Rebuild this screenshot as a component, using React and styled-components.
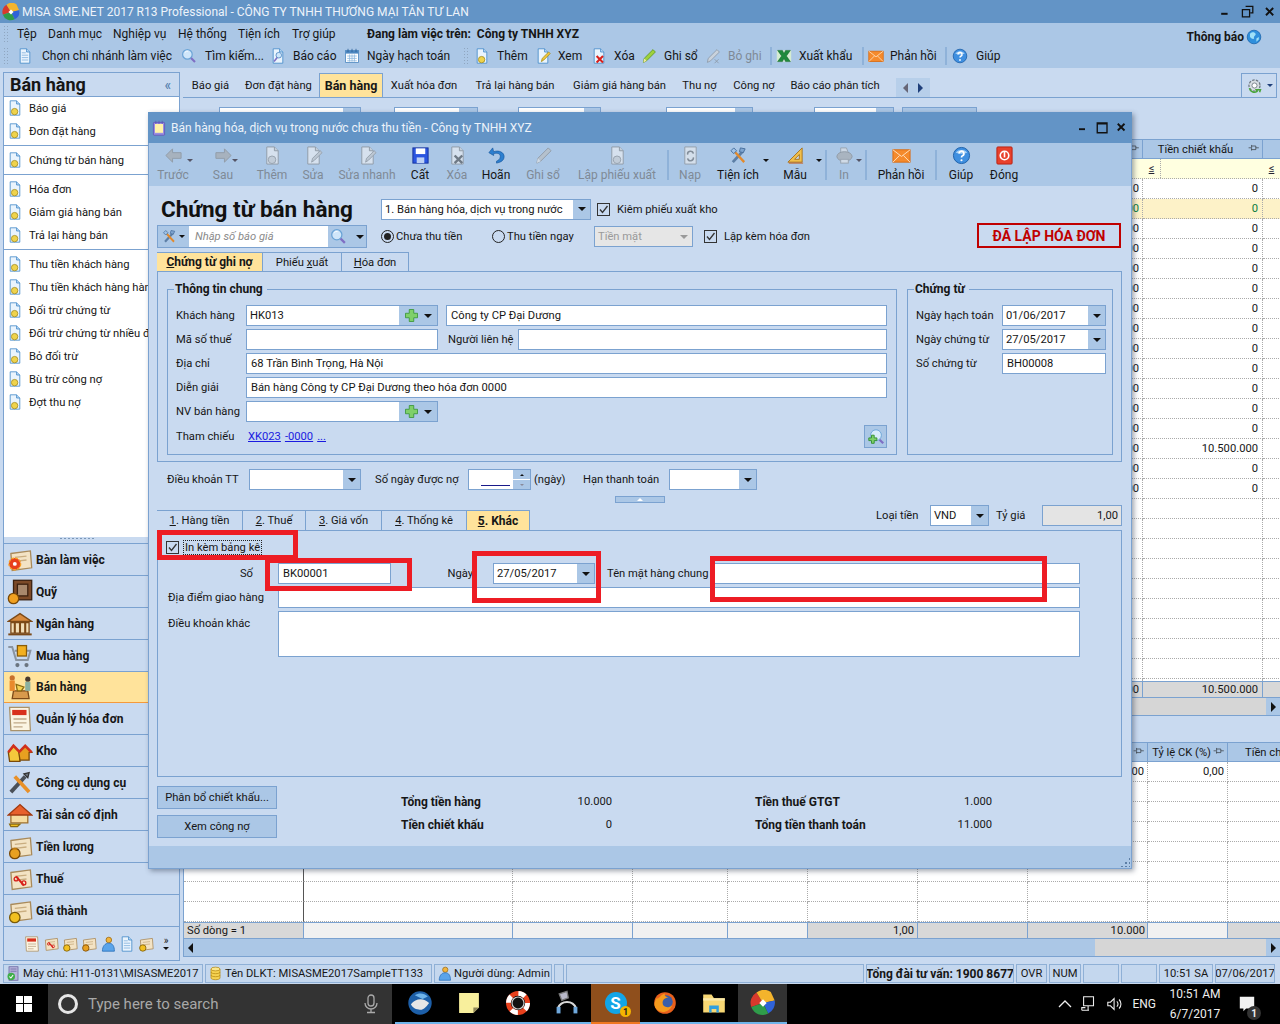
import React from 'react';
import styled, { createGlobalStyle } from 'styled-components';

const C = { title: '#6394c6', bar: '#abc7e6', body: '#c9daf0', line: '#7ba2d0', yellow: '#ffe39b', text: '#161616' };

const GlobalStyle = createGlobalStyle`
  html, body { margin: 0; padding: 0; background: ${C.body}; }
  body { font-family: Roboto, "Liberation Sans", Arial, sans-serif; font-size: 11.2px; color: ${C.text}; }
  * { box-sizing: border-box; }
  b { font-size: 12px; }
`;

const Svg = styled.svg`
  flex: none;
  display: block;
  ${p => p.$off && 'filter: grayscale(1) opacity(.6);'}
`;

const page = <path d="M4 1h8l4 4v14H4z" fill="#eaf4fd" stroke="#3f88c8" />;
const fold = <path d="M12 1v4h4" fill="#b9d8f2" stroke="#3f88c8" />;
const lines = <path d="M6 6h5M6 9h8M6 12h8M6 15h8" stroke="#7fb0dc" fill="none" />;
const scroll = <><path d="M3 5l15-2 1 13-15 2z" fill="#f3e3c4" stroke="#a98a5a" /><path d="M6 8l9-1M6 11l9-1" stroke="#c9ad80" /></>;
const bag = <><circle cx="6" cy="15" r="4" fill="#e8a020" stroke="#7a4a08" /><path d="M4 10.5h4l-1 1.5H5z" fill="#c07a10" /></>;

const shapes = {
  docAdd: <>{page}{fold}<circle cx="9.5" cy="14.5" r="4" fill="#efd34c" stroke="#a38c1d" /></>,
  docEdit: <>{page}{fold}<path d="M8 17l1-4 8-8 2 2-8 8z" fill="#f2c83a" stroke="#a38c1d" /></>,
  docDel: <>{page}{fold}<path d="M7 10l8 8M15 10l-8 8" stroke="#d8201c" strokeWidth="2.6" /></>,
  docList: <>{page}{fold}{lines}</>,
  search: <><circle cx="8" cy="8" r="6" fill="#cfe6fa" stroke="#6aa3d6" strokeWidth="1.5" /><path d="M5 5.5a4 4 0 0 1 4-1.5" stroke="#fff" fill="none" /><path d="M12.5 12.5l5 5" stroke="#7f6fc4" strokeWidth="2.6" /></>,
  report: <>{page}{fold}<circle cx="11" cy="9" r="3.5" fill="#cfe6fa" stroke="#4c87c0" /><path d="M9 12l-4 5" stroke="#7f6fc4" strokeWidth="2" /></>,
  calendar: <><rect x="2" y="3" width="16" height="15" fill="#fff" stroke="#4c87c0" /><rect x="2" y="3" width="16" height="4" fill="#4c87c0" /><path d="M5 1v4M10 1v4M15 1v4" stroke="#2a5d94" /><path d="M4 10h12M4 13h12M4 16h12M7 8v9M10 8v9M13 8v9" stroke="#8bb7de" /></>,
  pen: <><path d="M3 18l1-5L15 2l3 3L7 16z" fill="#9fd23c" stroke="#5c9420" /><path d="M3 18l1-5 3 3z" fill="#f5e9a0" /></>,
  penOff: <><path d="M3 18l1-5L15 2l3 3L7 16z" fill="#c9d2dc" stroke="#8b97a5" /><path d="M12 14l5 5M17 14l-5 5" stroke="#8b97a5" /></>,
  excel: <><path d="M1 3h18v14H1z" fill="#d5ecd2" /><path d="M2 3h6l2 4 2-4h6l-5 7 5 7h-6l-2-4-2 4H2l5-7z" fill="#1f8a3c" stroke="#0f5f26" strokeWidth=".6" /></>,
  mail: <><rect x="1" y="4" width="18" height="13" fill="#f58a2c" stroke="#d96a10" /><path d="M1 4l9 7 9-7M1 17l7-7M19 17l-7-7" stroke="#ffe3c2" fill="none" /></>,
  help: <><circle cx="10" cy="10" r="8.5" fill="#3f8fe0" stroke="#1c5fa8" /><path d="M4 7a7 6 0 0 1 12 0 9 4 0 0 1-12 0" fill="#a9d2f6" /><path d="M7.5 8a2.5 2.5 0 1 1 3.5 2.3c-.8.4-1 .9-1 1.7" stroke="#fff" strokeWidth="1.8" fill="none" /><circle cx="10" cy="15" r="1.1" fill="#fff" /></>,
  globe: <><circle cx="10" cy="10" r="8.5" fill="#2f8fdc" stroke="#1a66ad" /><path d="M5 6c3-3 6-2 7 0s-3 3-2 5-3 2-5-1z" fill="#9ee0f8" /><path d="M13 12l3-2v3l-3 3z" fill="#9ee0f8" /></>,
  gear: <><circle cx="10" cy="10" r="6.5" fill="#d8dde2" stroke="#6d7680" strokeWidth="1.5" strokeDasharray="3 1.5" /><circle cx="10" cy="10" r="3" fill="#fff" stroke="#6d7680" /><path d="M4 13a6 6 0 0 0 9 4l-1-2 5 0-1 3" stroke="#4aa63a" strokeWidth="1.8" fill="none" /></>,
  back: <path d="M9 3L2 10l7 7v-4h9V7H9z" fill="#98a6b5" stroke="#74818f" />,
  forward: <path d="M11 3l7 7-7 7v-4H2V7h9z" fill="#98a6b5" stroke="#74818f" />,
  save: <><rect x="2" y="2" width="16" height="16" fill="#2a55e0" stroke="#13309c" /><rect x="5" y="2.5" width="10" height="6" fill="#fff" /><rect x="6" y="12" width="8" height="6" fill="#bcd0f5" /></>,
  undo: <path d="M6 2L2 7l5 3V8c4-1 7 0 7 3s-2 4-4 5v2c5-1 8-3 8-7s-5-7-11-5z" fill="#2c7fd0" stroke="#16569c" strokeWidth=".7" />,
  reload: <><path d="M4 1h12v18H4z" fill="#eceff2" stroke="#7a858f" /><path d="M7 9a3 3 0 0 1 6-1M13 12a3 3 0 0 1-6 1" stroke="#5d6974" strokeWidth="1.6" fill="none" /></>,
  tools: <><path d="M4 17L15 5" stroke="#5d7fa6" strokeWidth="3" /><path d="M16 17L6 6" stroke="#e28a2c" strokeWidth="2.5" /><path d="M12 2l5 1-2 4-4-1z" fill="#7fa5d0" stroke="#486f9c" /><path d="M2 5l3-3 3 3-3 3z" fill="#9fc3e8" stroke="#486f9c" /></>,
  ruler: <><path d="M17 2v15H2z" fill="#f1c04c" stroke="#a8741c" /><path d="M14 9v5H9z" fill="#c9daf0" stroke="#a8741c" /><path d="M3 18h15" stroke="#c65c1c" /></>,
  printer: <><path d="M6 2h6l2 5H6z" fill="#e2e2e2" stroke="#8c8c8c" /><ellipse cx="10" cy="11" rx="8" ry="5" fill="#a7a7a7" stroke="#7d7d7d" /><rect x="6" y="14" width="8" height="4" fill="#e8e8e8" stroke="#8c8c8c" /></>,
  close: <><rect x="2" y="1" width="16" height="18" rx="1" fill="#e8402c" stroke="#b92010" /><circle cx="10" cy="10" r="4.5" fill="none" stroke="#fff" strokeWidth="1.7" /><path d="M10 6v6" stroke="#fff" strokeWidth="1.7" /></>,
  plus: <path d="M7 2h6v5h5v6h-5v5H7v-5H2V7h5z" fill="#7fd06a" stroke="#2f8f2c" />,
  lensPlus: <><circle cx="10" cy="8" r="6" fill="#d8ecfb" stroke="#6aa3d6" /><path d="M14 13l4 4" stroke="#7f6fc4" strokeWidth="2.5" /><path d="M5 8h3v3h3v3H8v3H5v-3H2v-3h3z" fill="#7fd06a" stroke="#2f8f2c" /></>,
  pin: <path d="M1 8h4M5 4h1v8H5M6 5h7v6H6M13 8h5" fill="none" stroke="#222" />,
  note: <><rect x="3" y="3" width="14" height="16" rx="1" fill="#9a8fe0" stroke="#5f50b8" /><rect x="5" y="5" width="10" height="11" fill="#fff3a8" /><path d="M6 1v4M10 1v4M14 1v4" stroke="#5f50b8" /></>,
  server: <><rect x="4" y="1" width="12" height="18" fill="#b7b4dc" stroke="#66639c" /><path d="M6 4h8M6 7h8" stroke="#66639c" /><circle cx="7" cy="14" r="5" fill="#3fae4a" /><path d="M4.5 14l2 2 3-4" stroke="#fff" strokeWidth="1.4" fill="none" /></>,
  db: <><path d="M4 4v12c0 3 12 3 12 0V4z" fill="#f5d252" stroke="#b58a12" /><ellipse cx="10" cy="4" rx="6" ry="2.5" fill="#fbe68c" stroke="#b58a12" /><path d="M4 8c0 3 12 3 12 0M4 12c0 3 12 3 12 0" fill="none" stroke="#b58a12" /></>,
  user: <><circle cx="11" cy="5" r="3.5" fill="#f2b43c" stroke="#9c6a10" /><path d="M3 19c0-6 3-10 8-10s7 4 7 10z" fill="#5aa4ea" stroke="#2a6fb8" /></>,
  flower: <>{scroll}<circle cx="6" cy="13" r="4.5" fill="#e8401c" stroke="#f8a020" strokeDasharray="2 1" /><circle cx="6" cy="13" r="1.5" fill="#fff" /></>,
  safe: <><rect x="5" y="1" width="14" height="15" fill="#7c4a28" stroke="#3c2210" /><rect x="8" y="4" width="8" height="9" fill="#a8886c" stroke="#3c2210" /><circle cx="5" cy="15" r="4" fill="#f0a020" stroke="#7a4a08" /></>,
  bank: <><path d="M1 8l9-6 9 6z" fill="#d88a3c" stroke="#7c4a18" /><path d="M3 9h14v8H3z" fill="#f3dfb8" stroke="#7c4a18" /><path d="M6 9v8M10 9v8M14 9v8" stroke="#7c4a18" strokeWidth="1.6" /><path d="M1 18h18" stroke="#7c4a18" strokeWidth="1.5" /></>,
  cart: <><path d="M1 3h3l3 10h9l2-7H6" fill="none" stroke="#8a94a0" strokeWidth="1.5" /><rect x="8" y="2" width="7" height="8" fill="#f2b020" stroke="#8a5c08" /><circle cx="8" cy="17" r="1.6" fill="#6b7580" /><circle cx="15" cy="17" r="1.6" fill="#6b7580" /></>,
  sell: <><path d="M5 13h11l1 6H4z" fill="#d89a4c" stroke="#7c4a18" /><circle cx="4" cy="3" r="2" fill="#c8702c" /><path d="M2 5h4v8H2z" fill="#e88a2c" /><circle cx="16" cy="4" r="2" fill="#4a3a2c" /><path d="M14 6h4v7h-4z" fill="#8ab0a0" /><path d="M7 8l6 2-2 3H8z" fill="#f5d252" stroke="#8a6a10" /></>,
  invoice: <><path d="M2 1h15l1 18H3z" fill="#fbf4e2" stroke="#a9926a" /><rect x="4" y="3" width="11" height="4" fill="#d8301c" /><path d="M5 10h10M5 13h10M5 16h7" stroke="#c0a888" /></>,
  store: <><path d="M1 11l4-5 5 5v7H2z" fill="#f5c83c" stroke="#7a4a08" /><path d="M9 11l5-5 5 5h-2v6H10z" fill="#e8a020" stroke="#7a4a08" /><path d="M1 11l4-5 5 5M9 11l5-5 5 5" fill="none" stroke="#d0301c" strokeWidth="2" /></>,
  wrench: <><path d="M3 17L14 5" stroke="#4a5058" strokeWidth="3" /><path d="M17 17L6 5" stroke="#e89028" strokeWidth="2.8" /><path d="M13 3l4-1-1 4z" fill="#6d7680" stroke="#333" /></>,
  house: <><path d="M3 9h13v7H3z" fill="#f6dca0" stroke="#a0702c" /><path d="M1 10l9-8 9 8z" fill="#e8602c" stroke="#a03a10" /><path d="M2 17h8l-2 2H3z" fill="#f0c020" stroke="#8a6a10" /></>,
  pay: <>{scroll}{bag}</>,
  tax: <>{scroll}<path d="M7 8l6 7" stroke="#d8201c" strokeWidth="1.5" /><circle cx="7" cy="10" r="1.5" fill="none" stroke="#d8201c" /><circle cx="13" cy="13" r="1.5" fill="none" stroke="#d8201c" /></>,
  cost: <>{scroll}<circle cx="6" cy="15" r="4" fill="#f2c020" stroke="#7a5a08" /></>,
  misa: <><path d="M10 10L5 2a9 9 0 0 0-4 11z" fill="#d8392c" /><path d="M10 10L5 2a9 9 0 0 1 11-.5L19 8z" fill="#f4b42c" /><path d="M10 10l9-2a9 9 0 0 1-5 10z" fill="#2f62d8" /><path d="M10 10l4 8a9 9 0 0 1-13-5z" fill="#2f9c4a" /><rect x="8" y="8" width="4" height="4" transform="rotate(45 10 10)" fill="#fff" /></>,
  thunder: <><circle cx="10" cy="10" r="9" fill="#1d5fa8" /><path d="M3 11c4-5 10-5 14-1-3 4-5 6-8 5-3 0-5-2-6-4z" fill="#e6e6e6" /><path d="M6 4c3-2 7-2 10 1l-4 2z" fill="#6fb4ea" /></>,
  sticky: <><path d="M1 1h18v13l-5 5H1z" fill="#f8ef9c" /><path d="M19 14l-5 5v-5z" fill="#8c8458" /></>,
  lifesaver: <><circle cx="10" cy="10" r="8" fill="none" stroke="#e8401c" strokeWidth="4" /><circle cx="10" cy="10" r="8" fill="none" stroke="#fff" strokeWidth="4" strokeDasharray="6 6.6" /><circle cx="10" cy="10" r="5" fill="#111" stroke="#ccc" /></>,
  headset: <><path d="M3 14a7.5 7.5 0 0 1 14 0" fill="none" stroke="#d8d8d8" strokeWidth="1.6" /><rect x="2" y="13" width="3" height="5" fill="#6fa8dc" /><rect x="15" y="13" width="3" height="5" fill="#6fa8dc" /><path d="M4 3l6-2 1 5-5 2z" fill="#b8b8c8" stroke="#777" /></>,
  firefox: <><circle cx="10" cy="10" r="9" fill="#e8601c" /><circle cx="11" cy="9" r="5.5" fill="#3a5ea8" /><path d="M3 6c2 1 3-3 7-4-1 2 1 3 3 3-3 1-5 2-5 5s4 5 8 2c-2 5-8 7-12 4S1 9 3 6z" fill="#f59a1c" /></>,
  folder: <><path d="M1 3h7l2 3h9v12H1z" fill="#f7d774" /><path d="M1 6h18v2H1z" fill="#fbe9a8" /><path d="M6 12h8v6h-2v-3H8v3H6z" fill="#2f9fe0" /></>,
  monitor: <path d="M4 2h11v10H4zM9 12v5M2 17h8M2 17v-3h4" fill="none" stroke="#eee" strokeWidth="1.2" />,
  volume: <path d="M2 8h3l4-4v12l-4-4H2zM12 7a4 4 0 0 1 0 6M14.5 5a7 7 0 0 1 0 10" fill="none" stroke="#eee" strokeWidth="1.2" />,
  mic: <><rect x="7" y="1" width="6" height="11" rx="3" fill="none" stroke="#aaa" strokeWidth="1.3" /><path d="M4 9a6 6 0 0 0 12 0M10 15v3M6 18.5h8" fill="none" stroke="#aaa" strokeWidth="1.3" /></>,
  bubble: <path d="M2 2h16v13H9l-3 3v-3H2z" fill="#f2f2f2" />,
  winmin: <path d="M4 11h8v2.5H4z" fill="#111" />,
  winrestore: <path d="M7 3h9v8h-3M3 7h9v9H3z" fill="none" stroke="#111" strokeWidth="1.6" />,
  winmax: <path d="M3 4h13v13H3zM3 5h13" fill="none" stroke="#111" strokeWidth="1.8" />,
  winclose: <path d="M5 5l9 9M14 5l-9 9" stroke="#111" strokeWidth="2.4" />,
};

const Icon = ({ name, size = 16, off }) => (
  <Svg width={size} height={size} viewBox="0 0 20 20" $off={off}>{shapes[name]}</Svg>
);

const Caret = styled.i`
  flex: none;
  width: 0;
  height: 0;
  border-left: ${p => p.$s || 4}px solid transparent;
  border-right: ${p => p.$s || 4}px solid transparent;
  border-${p => (p.$up ? 'bottom' : 'top')}: ${p => p.$s || 4}px solid ${p => p.$c || '#111'};
`;

const Root = styled.div`
  position: relative;
  width: 1280px;
  height: 1024px;
  overflow: hidden;
  display: flex;
  flex-direction: column;
  background: ${C.body};
`;

const TitleBar = styled.div`
  height: 23px;
  background: ${C.title};
  display: flex;
  align-items: center;
  padding: 0 2px 0 2px;
  color: #edf3fa;
`;
const TitleText = styled.span`
  margin-left: 2px;
  font-size: 12px;
  flex: 1;
`;
const WinButtons = styled.div`
  display: flex;
  gap: ${p => p.$gap || 6}px;
`;

const TopBars = styled.div`
  height: 45px;
  background: ${C.bar};
  font-size: 12px;
`;
const BarRow = styled.div`
  height: 22px;
  display: flex;
  align-items: center;
  padding-left: 3px;
`;
const Grip = styled.span`
  flex: none;
  width: 5px;
  height: 18px;
  margin-right: ${p => p.$mr || 0}px;
  background: radial-gradient(circle, #8fa6c0 1px, transparent 1px) 0 0 / 3px 3px;
`;
const MenuItem = styled.span`
  flex: none;
  width: ${p => p.$w}px;
`;
const Working = styled.b`
  flex: 1;
`;
const Notify = styled.b`
  display: flex;
  align-items: center;
  gap: 2px;
  margin-right: 18px;
  margin-top: 5px;
`;
const BarTool = styled.span`
  flex: none;
  width: ${p => p.$w}px;
  display: flex;
  align-items: center;
  gap: ${p => p.$gap || 7}px;
  color: ${p => (p.$off ? '#7f8a96' : C.text)};
`;
const BarSep = styled.span`
  flex: none;
  width: ${p => p.$w || 6}px;
  height: 18px;
  border-left: 2px solid #8fb2d9;
`;

const Main = styled.div`
  height: 894px;
  display: flex;
  padding-left: 3px;
  gap: 3px;
`;

const Sidebar = styled.aside`
  flex: none;
  width: 177px;
  height: 889px;
  margin-top: 4px;
  display: flex;
  flex-direction: column;
  border: 1px solid ${C.line};
`;
const SideHead = styled.div`
  height: 24px;
  display: flex;
  align-items: center;
  justify-content: space-between;
  padding: 0 8px 0 6px;
  font-size: 18px;
  font-weight: bold;
  border-bottom: 1px solid ${C.line};
`;
const Collapse = styled.span`
  font-size: 14px;
  font-weight: normal;
  color: #4c78a8;
`;
const SideList = styled.div`
  height: 440px;
  background: #fff;
`;
const SideItem = styled.div`
  height: 23px;
  display: flex;
  align-items: center;
  gap: 6px;
  padding: 0 0 1px 3px;
  white-space: nowrap;
  overflow: hidden;
`;
const SideSep = styled.div`
  height: 6px;
  padding-top: 2px;
  &::before {
    content: '';
    display: block;
    border-top: 1px solid ${C.line};
  }
`;
const Splitter = styled.div`
  height: 6px;
  display: flex;
  justify-content: center;
  padding-right: 30px;
  &::before {
    content: '';
    width: 36px;
    height: 3px;
    background: radial-gradient(circle, #7b97b8 1px, transparent 1px) 0 0 / 4px 3px;
  }
`;
const NavItem = styled.div`
  height: 32px;
  display: flex;
  align-items: center;
  gap: 3px;
  padding-left: 3px;
  font-size: 12px;
  font-weight: bold;
  border-top: 1px solid ${C.line};
  background: ${p => (p.$active ? C.yellow : 'transparent')};
  ${p => p.$active && 'border-bottom: 1px solid #f59a3c; margin-bottom: -1px; position: relative;'}
`;
const NavStrip = styled.div`
  flex: 1;
  display: flex;
  align-items: center;
  gap: 3px;
  padding-left: 20px;
  border-top: 1px solid ${C.line};
`;
const More = styled.div`
  display: flex;
  flex-direction: column;
  align-items: center;
  margin-left: 6px;
  font-size: 10px;
  line-height: 8px;
  gap: 2px;
`;

const Pane = styled.section`
  flex: 1;
  padding-top: 5px;
  display: flex;
  flex-direction: column;
`;
const PaneTabs = styled.nav`
  height: 25px;
  margin-right: 4px;
  display: flex;
  align-items: stretch;
  border-bottom: 1px solid ${C.line};
`;
const PaneTab = styled.span`
  flex: none;
  width: ${p => p.$w}px;
  display: flex;
  align-items: center;
  justify-content: center;
  white-space: nowrap;
  ${p => p.$active && `
    font-size: 12.5px;
    font-weight: bold;
    background: ${C.yellow};
    border: 1px solid ${C.line};
    border-bottom: 0;
  `}
`;
const TabScroll = styled.span`
  width: 34px;
  margin: 5px 0 0 9px;
  background: #b7cfea;
  display: flex;
  align-items: center;
  justify-content: center;
  gap: 10px;
`;
const Tri = styled.i`
  width: 0;
  height: 0;
  border-top: 5px solid transparent;
  border-bottom: 5px solid transparent;
  border-${p => (p.$dir === 'left' ? 'right' : 'left')}: 5px solid ${p => p.$c};
`;
const GearBox = styled.span`
  margin-left: auto;
  width: 36px;
  display: flex;
  align-items: center;
  justify-content: center;
  gap: 4px;
  border: 1px solid ${C.line};
  border-bottom: 0;
`;
const StubRow = styled.div`
  height: 41px;
  padding: 9px 0 0 36px;
  display: flex;
  align-items: flex-start;
`;
const StubField = styled.span`
  flex: none;
  height: 20px;
  width: ${p => p.$w}px;
  margin-right: ${p => p.$mr || 0}px;
  border: 1px solid ${C.line};
  background: linear-gradient(90deg, #fff ${p => p.$white}%, ${C.bar} ${p => p.$white}%);
`;

const GridHead = styled.div`
  display: grid;
  grid-template-columns: ${p => p.$cols};
  height: 20px;
  background: ${C.bar};
  border-top: 1px solid ${C.line};
  border-bottom: 1px solid ${C.line};
`;
const HeadCell = styled.span`
  display: flex;
  align-items: center;
  justify-content: ${p => p.$align || 'flex-end'};
  padding: 0 ${p => (p.$align ? 0 : 2)}px 0 ${p => p.$pl || 2}px;
  border-right: 1px solid ${C.line};
  white-space: nowrap;
  overflow: hidden;
  gap: 2px;
`;
const HeadTitle = styled.span`
  flex: 1;
  text-align: center;
`;
const FilterRow = styled.div`
  display: grid;
  grid-template-columns: ${p => p.$cols};
  height: 20px;
  background: #ffffe0;
  border-bottom: 1px dotted #aaa;
`;
const FilterOp = styled.span`
  display: flex;
  width: 18px;
  height: 100%;
  align-items: center;
  justify-content: center;
  border-right: 1px dotted #aaa;
  text-decoration: underline;
  color: #223;
`;
const RowsArea = styled.div`
  height: ${p => p.$h}px;
  overflow: hidden;
  background: #fff;
`;
const DataRow = styled.div`
  display: grid;
  grid-template-columns: ${p => p.$cols};
  height: 20px;
  background: ${p => (p.$hl ? '#fdf2c8' : 'transparent')};
  color: ${p => (p.$hl ? '#0a7a3c' : C.text)};
`;
const Cell = styled.span`
  display: flex;
  align-items: center;
  justify-content: flex-end;
  padding-right: ${p => p.$pr || 3}px;
  border-bottom: 1px dotted #aaa;
  border-right: ${p => (p.$solid ? '1px solid #555' : '1px dotted #aaa')};
  white-space: nowrap;
`;
const TotalRow = styled.div`
  display: grid;
  grid-template-columns: ${p => p.$cols};
  height: 17px;
  background: #d8d8d8;
  border-top: 1px solid ${C.line};
  border-bottom: 1px solid ${C.line};
`;
const TotalCell = styled.span`
  display: flex;
  align-items: center;
  justify-content: ${p => (p.$left ? 'flex-start' : 'flex-end')};
  padding: 0 ${p => (p.$pr ? p.$pr : 3)}px 0 3px;
  border-right: 1px solid ${C.line};
  background: ${p => (p.$light ? '#f1f1f1' : 'transparent')};
  white-space: nowrap;
`;
const HScroll = styled.div`
  height: ${p => p.$h}px;
  display: flex;
  align-items: center;
  background: ${p => p.$bg || '#d6d6d6'};
  border-bottom: 1px solid ${C.line};
`;
const ScrollTrack = styled.span`
  flex: 1;
  height: 100%;
  display: flex;
  align-items: center;
  padding-left: 4px;
  background: linear-gradient(90deg, ${C.bar} ${p => p.$fill || 0}%, #d6d6d6 ${p => p.$fill || 0}%);
`;
const ScrollBtn = styled.span`
  flex: none;
  width: 15px;
  height: 100%;
  display: flex;
  align-items: center;
  justify-content: center;
  background: ${C.bar};
`;
const Band = styled.div`
  height: 26px;
`;
const GridWrap = styled.div`
  border-left: 1px solid ${C.line};
`;

// the dialog sits on top of the main window
const Dialog = styled.div`
  position: absolute;
  left: 148px;
  top: 112px;
  width: 984px;
  height: 757px;
  display: flex;
  flex-direction: column;
  background: ${C.body};
  border: 1px solid ${C.line};
  border-top: 0;
  box-shadow: 2px 2px 5px rgba(40, 50, 70, .45);
`;
const DialogTitle = styled.div`
  flex: none;
  height: 31px;
  background: ${C.title};
  display: flex;
  align-items: center;
  padding: 0 3px 0 3px;
  color: #edf3fa;
  margin: 0 -1px;
  font-size: 12px;
`;
const DialogName = styled.span`
  flex: 1;
  margin-left: 4px;
`;
const DlgBar = styled.div`
  flex: none;
  height: 43px;
  background: ${C.bar};
  display: flex;
  padding-left: 4px;
  font-size: 12px;
`;
const Tool = styled.div`
  position: relative;
  flex: none;
  width: ${p => p.$w}px;
  display: flex;
  flex-direction: column;
  align-items: center;
  padding-top: 3px;
  color: ${p => (p.$off ? '#7f8a96' : C.text)};
  white-space: nowrap;
`;
const ToolText = styled.span`
  margin-top: 3px;
`;
const ToolDrop = styled.span`
  position: absolute;
  right: ${p => p.$r}px;
  top: 19px;
`;
const ToolSep = styled.span`
  flex: none;
  width: 2px;
  height: 30px;
  margin: 7px 0 0 ${p => p.$ml || 0}px;
  background: #8fb2d9;
`;

const DlgBody = styled.div`
  flex: 1;
  padding: 0 9px 0 8px;
  display: flex;
  flex-direction: column;
`;
const HeadRow = styled.div`
  flex: none;
  height: ${p => p.$h}px;
  margin-top: ${p => p.$mt}px;
  display: flex;
  align-items: center;
`;
const BigTitle = styled.h1`
  flex: none;
  width: 224px;
  margin: 0;
  padding-left: 4px;
  font-size: 22.5px;
  font-weight: bold;
  color: #111;
  white-space: nowrap;
`;
const Combo = styled.span`
  flex: none;
  display: flex;
  height: ${p => p.$h || 21}px;
  width: ${p => (p.$w ? `${p.$w}px` : 'auto')};
  margin-left: ${p => p.$ml || 0}px;
  border: 1px solid ${C.line};
  background: ${p => (p.$off ? '#e6e6e6' : '#fff')};
  color: ${p => (p.$off ? '#9a9a9a' : C.text)};
`;
const ComboText = styled.span`
  flex: 1;
  padding-left: 3px;
  display: flex;
  align-items: center;
  white-space: nowrap;
  overflow: hidden;
`;
const ComboBtn = styled.span`
  flex: none;
  width: ${p => p.$w || 17}px;
  display: flex;
  align-items: center;
  justify-content: center;
  gap: 5px;
  background: ${p => (p.$off ? 'transparent' : C.bar)};
`;
const Check = styled.span`
  flex: none;
  width: 13px;
  height: 13px;
  display: flex;
  background: ${C.body};
  border: 1px solid #333;
`;
const CheckLabel = styled.label`
  display: flex;
  align-items: center;
  gap: ${p => p.$gap || 7}px;
  margin-left: ${p => p.$ml || 0}px;
  white-space: nowrap;
`;
const Radio = styled.span`
  flex: none;
  width: 13px;
  height: 13px;
  border-radius: 50%;
  border: 1px solid #222;
  background: ${C.body};
  display: flex;
  align-items: center;
  justify-content: center;
  &::after {
    content: '';
    width: 7px;
    height: 7px;
    border-radius: 50%;
    background: ${p => (p.$on ? '#222' : 'transparent')};
  }
`;
const RadioLabel = styled.label`
  flex: none;
  width: ${p => p.$w}px;
  margin-left: ${p => p.$ml || 0}px;
  display: flex;
  align-items: center;
  gap: 2px;
  white-space: nowrap;
`;
const SearchBox = styled.span`
  flex: none;
  width: 210px;
  height: 23px;
  display: flex;
  align-items: center;
  background: ${C.bar};
  border: 1px solid ${C.line};
`;
const SearchTools = styled.span`
  flex: none;
  width: 31px;
  display: flex;
  align-items: center;
  justify-content: center;
  gap: 2px;
`;
const SearchInput = styled.span`
  flex: none;
  width: 139px;
  height: 100%;
  background: #fff;
  padding-left: 6px;
  display: flex;
  align-items: center;
  font-style: italic;
  color: #8a8a8a;
`;
const SearchBtn = styled.span`
  flex: 1;
  display: flex;
  align-items: center;
  justify-content: center;
  gap: 9px;
`;
const Stamp = styled.div`
  flex: none;
  width: 144px;
  height: 25px;
  margin: -2px 1px 0 auto;
  display: flex;
  align-items: center;
  justify-content: center;
  border: 2px solid #c00000;
  font-size: 14px;
  font-weight: bold;
  color: #c00000;
`;
const TabRow = styled.div`
  flex: none;
  display: flex;
  height: ${p => p.$h || 19}px;
  margin-top: ${p => p.$mt || 0}px;
  align-items: flex-end;
`;
const FormTab = styled.span`
  flex: none;
  height: ${p => p.$h || 19}px;
  width: ${p => p.$w}px;
  display: flex;
  align-items: center;
  justify-content: center;
  border: 1px solid ${C.line};
  border-left: 0;
  border-bottom: 0;
  white-space: pre;
  ${p => p.$active && `background: ${C.yellow}; font-weight: bold; font-size: 12px;`}
`;
const Panel = styled.div`
  flex: none;
  height: ${p => p.$h}px;
  border: 1px solid ${C.line};
  padding: ${p => p.$pad};
  display: flex;
  ${p => p.$col && 'flex-direction: column;'}
  gap: ${p => p.$gap || 0}px;
`;
const Group = styled.div`
  position: relative;
  flex: ${p => (p.$w ? 'none' : 1)};
  width: ${p => (p.$w ? `${p.$w}px` : 'auto')};
  height: 166px;
  border: 1px solid ${C.line};
  padding: 15px ${p => p.$pr}px 0 8px;
  display: flex;
  flex-direction: column;
  gap: 3px;
`;
const Legend = styled.b`
  position: absolute;
  left: 6px;
  top: -8px;
  padding: 0 4px 0 1px;
  background: ${C.body};
  line-height: 14px;
`;
const FieldRow = styled.div`
  flex: none;
  display: flex;
  align-items: center;
  height: ${p => p.$h || 21}px;
  margin-top: ${p => p.$mt || 0}px;
  padding-left: ${p => p.$pl || 0}px;
`;
const Label = styled.span`
  flex: none;
  width: ${p => p.$w}px;
  padding-left: ${p => p.$pl || 0}px;
  padding-right: ${p => p.$pr || 0}px;
  text-align: ${p => p.$align || 'left'};
  white-space: nowrap;
  ${p => p.$top && 'align-self: flex-start; padding-top: 6px;'}
`;
const Field = styled.span`
  flex: ${p => (p.$w ? 'none' : 1)};
  width: ${p => (p.$w ? `${p.$w}px` : 'auto')};
  height: ${p => p.$h || 21}px;
  margin-left: ${p => p.$ml || 0}px;
  padding: 0 3px 0 4px;
  display: flex;
  align-items: center;
  justify-content: ${p => (p.$right ? 'flex-end' : 'flex-start')};
  border: 1px solid ${C.line};
  background: ${p => (p.$grey ? '#e4e4e4' : '#fff')};
  white-space: nowrap;
`;
const Links = styled.span`
  display: flex;
  gap: 4px;
  color: #1a1ae0;
  text-decoration: underline;
`;
const LensBtn = styled.span`
  flex: none;
  width: 23px;
  height: 23px;
  margin-left: auto;
  display: flex;
  align-items: center;
  justify-content: center;
  background: ${C.bar};
  border: 1px solid ${C.line};
`;
const Spinner = styled.span`
  flex: none;
  width: 63px;
  height: 21px;
  display: flex;
  background: #fff;
  border: 1px solid ${C.line};
`;
const SpinBlank = styled.span`
  flex: 1;
  margin: 0 3px 3px 12px;
  border-bottom: 1px solid #1a1a8a;
`;
const SpinBtns = styled.span`
  flex: none;
  width: 17px;
  display: flex;
  flex-direction: column;
`;
const SpinBtn = styled.span`
  flex: 1;
  display: flex;
  align-items: center;
  justify-content: center;
  background: ${C.bar};
  &:last-child { margin-top: 1px; }
`;
const CollapseBtn = styled.span`
  flex: none;
  width: 50px;
  height: 7px;
  margin: 6px 0 0 458px;
  display: flex;
  justify-content: center;
  align-items: center;
  background: ${C.bar};
  border: 1px solid ${C.line};
`;
const TabsLine = styled.div`
  flex: none;
  display: flex;
  height: 25px;
  margin-top: 2px;
  justify-content: space-between;
`;
const TabsLeft = styled.div`
  display: flex;
  align-items: flex-end;
`;
const RateBox = styled.div`
  display: flex;
  align-items: center;
  height: 21px;
`;
const PrintCheck = styled.div`
  flex: none;
  height: 18px;
  margin: 7px 0 0 8px;
  display: flex;
  align-items: center;
  gap: 4px;
`;
const DottedLabel = styled.span`
  padding: 0 1px;
  border: 1px dotted #222;
  line-height: 13px;
`;
const Footer = styled.div`
  flex: 1;
  display: flex;
  padding-top: 9px;
`;
const FootBtns = styled.div`
  flex: none;
  width: 120px;
  display: flex;
  flex-direction: column;
  gap: 6px;
`;
const FootBtn = styled.span`
  height: 23px;
  display: flex;
  align-items: center;
  justify-content: center;
  background: ${C.bar};
  border: 1px solid ${C.line};
`;
const Totals = styled.div`
  margin-left: 124px;
  padding-top: 4px;
  display: grid;
  grid-template-columns: 140px 71px 143px 150px 87px;
  grid-auto-rows: 23px;
  align-items: center;
`;
const TotalLabel = styled.b`
  white-space: nowrap;
`;
const TotalValue = styled.span`
  text-align: right;
`;
const DlgFoot = styled.div`
  flex: none;
  height: 22px;
  background: ${C.bar};
  display: flex;
  justify-content: flex-end;
  align-items: flex-end;
  padding: 0 1px 1px 0;
`;
const ResizeGrip = styled.span`
  width: 10px;
  height: 10px;
  background: radial-gradient(circle, #5d7fa6 1px, transparent 1.2px) 0 0 / 4px 4px;
  clip-path: polygon(100% 0, 100% 100%, 0 100%);
`;
const Marker = styled.div`
  position: absolute;
  left: ${p => p.$x - 148}px;
  top: ${p => p.$y - 112}px;
  width: ${p => p.$w}px;
  height: ${p => p.$h}px;
  border: 5px solid #ed1c24;
  pointer-events: none;
`;

const Status = styled.footer`
  height: 22px;
  padding: 2px 2px 1px 3px;
  display: flex;
  gap: 2px;
`;
const StatusCell = styled.span`
  flex: none;
  width: ${p => p.$w}px;
  display: flex;
  align-items: center;
  justify-content: ${p => (p.$center ? 'center' : 'flex-start')};
  gap: 2px;
  padding-left: ${p => (p.$center ? 0 : 2)}px;
  background: #c4d7ee;
  border: 1px solid #8fb0d6;
  white-space: nowrap;
  overflow: hidden;
`;

const Taskbar = styled.div`
  height: 40px;
  background: #000;
  display: flex;
  color: #eee;
  font-size: 12px;
`;
const StartBtn = styled.span`
  flex: none;
  width: 48px;
  display: flex;
  align-items: center;
  justify-content: center;
`;
const WinLogo = styled.span`
  display: grid;
  grid-template-columns: 7px 8px;
  grid-template-rows: 7px 8px;
  gap: 1px;
  & i { background: #fff; }
`;
const TaskSearch = styled.span`
  flex: none;
  width: 344px;
  display: flex;
  align-items: center;
  padding: 0 11px 0 10px;
  background: #333;
  font-size: 15px;
  color: #a8a8a8;
`;
const Cortana = styled.span`
  flex: none;
  width: 20px;
  height: 20px;
  margin-right: 10px;
  border-radius: 50%;
  border: 3px solid #e6e6e6;
`;
const SearchHint = styled.span`
  flex: 1;
`;
const TaskApps = styled.div`
  flex: none;
  display: flex;
  padding-left: 3px;
`;
const TaskApp = styled.span`
  position: relative;
  flex: none;
  width: 49px;
  display: flex;
  align-items: center;
  justify-content: center;
  background: ${p => p.$bg || 'transparent'};
  border-bottom: 2px solid ${p => p.$accent || '#6fb4ea'};
`;
const SkypeMark = styled.span`
  width: 22px;
  height: 22px;
  border-radius: 50%;
  background: #12a5e6;
  color: #fff;
  font-weight: bold;
  font-size: 17px;
  display: flex;
  align-items: center;
  justify-content: center;
`;
const Badge = styled.span`
  position: absolute;
  right: ${p => p.$r}px;
  bottom: ${p => p.$b}px;
  width: ${p => p.$s}px;
  height: ${p => p.$s}px;
  border-radius: 50%;
  background: ${p => p.$bg};
  color: ${p => p.$c};
  font-size: ${p => p.$fs}px;
  font-weight: bold;
  display: flex;
  align-items: center;
  justify-content: center;
`;
const Tray = styled.div`
  flex: 1;
  display: flex;
  align-items: center;
  justify-content: flex-end;
  padding-right: 24px;
  gap: 8px;
`;
const Clock = styled.span`
  width: 62px;
  margin-right: 4px;
  text-align: center;
  line-height: 20px;
`;
const NotifyWrap = styled.span`
  position: relative;
`;

const dlgTools = [
  { w: 40, name: 'back', text: 'Trước', off: 1, drop: 0 },
  { w: 60, name: 'forward', text: 'Sau', off: 1, drop: 15 },
  { w: 38, name: 'docAdd', text: 'Thêm', off: 1 },
  { w: 44, name: 'docEdit', text: 'Sửa', off: 1 },
  { w: 64, name: 'docEdit', text: 'Sửa nhanh', off: 1 },
  { w: 42, name: 'save', text: 'Cất' },
  { w: 32, name: 'docDel', text: 'Xóa', off: 1 },
  { w: 46, name: 'undo', text: 'Hoãn' },
  { w: 48, name: 'pen', text: 'Ghi sổ', off: 1 },
  { w: 100, name: 'docAdd', text: 'Lập phiếu xuất', off: 1 },
  { sep: 1 },
  { w: 42, name: 'reload', text: 'Nạp', off: 1 },
  { w: 54, name: 'tools', text: 'Tiện ích', drop: -4 },
  { w: 60, name: 'ruler', text: 'Mẫu', drop: 3 },
  { sep: 1 },
  { w: 34, name: 'printer', text: 'In', off: 1, drop: -1 },
  { sep: 1, ml: 4 },
  { w: 68, name: 'mail', text: 'Phản hồi' },
  { sep: 1 },
  { w: 48, name: 'help', text: 'Giúp' },
  { w: 38, name: 'close', text: 'Đóng' },
];

const sideItems = [
  'Báo giá', 'Đơn đặt hàng', null, 'Chứng từ bán hàng', null, 'Hóa đơn', 'Giảm giá hàng bán', 'Trả lại hàng bán', null,
  'Thu tiền khách hàng', 'Thu tiền khách hàng hàng loạt', 'Đối trừ chứng từ', 'Đối trừ chứng từ nhiều đối tượng',
  'Bỏ đối trừ', 'Bù trừ công nợ', 'Đợt thu nợ',
];

const navItems = [
  ['flower', 'Bàn làm việc'], ['safe', 'Quỹ'], ['bank', 'Ngân hàng'], ['cart', 'Mua hàng'], ['sell', 'Bán hàng'],
  ['invoice', 'Quản lý hóa đơn'], ['store', 'Kho'], ['wrench', 'Công cụ dụng cụ'], ['house', 'Tài sản cố định'],
  ['pay', 'Tiền lương'], ['tax', 'Thuế'], ['cost', 'Giá thành'],
];

const topCols = '959px 120px 1fr';
const lowCols = '120px 209px 120px 95px 80px 110px 110px 120px 80px 1fr';
const topRows = Array.from({ length: 26 }, (_, i) => {
  if (i > 15) return ['', ''];
  return [i === 0 ? '0' : '00', i === 13 ? '10.500.000' : '0'];
});

const Tick = () => (
  <Svg width="11" height="11" viewBox="0 0 11 11"><path d="M2 5.5l2.5 3L9.5 2" fill="none" stroke="#333" strokeWidth="1.3" /></Svg>
);

export default function App() {
  return (
    <Root>
      <GlobalStyle />
      <TitleBar>
        <Icon name="misa" size={18} />
        <TitleText>MISA SME.NET 2017 R13 Professional - CÔNG TY TNHH THƯƠNG MẠI TÂN TƯ LAN</TitleText>
        <WinButtons>
          <Icon name="winmin" size={16} /><Icon name="winrestore" size={16} /><Icon name="winclose" size={16} />
        </WinButtons>
      </TitleBar>

      <TopBars>
        <BarRow>
          <Grip $mr={9} />
          <MenuItem $w={31}>Tệp</MenuItem>
          <MenuItem $w={65}>Danh mục</MenuItem>
          <MenuItem $w={65}>Nghiệp vụ</MenuItem>
          <MenuItem $w={60}>Hệ thống</MenuItem>
          <MenuItem $w={54}>Tiện ích</MenuItem>
          <MenuItem $w={75}>Trợ giúp</MenuItem>
          <Working>Đang làm việc trên:&nbsp; Công ty TNHH XYZ</Working>
          <Notify>Thông báo<Icon name="globe" size={16} /></Notify>
        </BarRow>
        <BarRow>
          <Grip $mr={9} />
          <BarTool $w={164} $gap={9}><Icon name="docList" />Chọn chi nhánh làm việc</BarTool>
          <BarTool $w={89} $gap={8}><Icon name="search" />Tìm kiếm...</BarTool>
          <BarTool $w={74} $gap={7}><Icon name="report" />Báo cáo</BarTool>
          <BarTool $w={119} $gap={7}><Icon name="calendar" />Ngày hạch toán</BarTool>
          <Grip $mr={6} />
          <BarTool $w={61}><Icon name="docAdd" />Thêm</BarTool>
          <BarTool $w={56}><Icon name="docEdit" />Xem</BarTool>
          <BarTool $w={50}><Icon name="docDel" />Xóa</BarTool>
          <BarTool $w={64}><Icon name="pen" />Ghi sổ</BarTool>
          <BarTool $w={65} $off><Icon name="penOff" />Bỏ ghi</BarTool>
          <BarSep />
          <BarTool $w={86}><Icon name="excel" />Xuất khẩu</BarTool>
          <BarSep />
          <BarTool $w={77} $gap={6}><Icon name="mail" />Phản hồi</BarTool>
          <BarSep $w={7} />
          <BarTool $w={60} $gap={8}><Icon name="help" />Giúp</BarTool>
        </BarRow>
      </TopBars>

      <Main>
        <Sidebar>
          <SideHead>Bán hàng<Collapse>«</Collapse></SideHead>
          <SideList>
            {sideItems.map((t, i) => (t
              ? <SideItem key={i}><Icon name="docAdd" size={16} />{t}</SideItem>
              : <SideSep key={i} />))}
          </SideList>
          <Splitter />
          {navItems.map(([icon, text]) => (
            <NavItem key={text} $active={text === 'Bán hàng'}><Icon name={icon} size={26} />{text}</NavItem>
          ))}
          <NavStrip>
            {['invoice', 'tax', 'cost', 'pay', 'user', 'docList', 'cost'].map((n, i) => <Icon key={i} name={n} size={16} />)}
            <More>»<Caret $s={3} /></More>
          </NavStrip>
        </Sidebar>

        <Pane>
          <PaneTabs>
            <PaneTab $w={55}>Báo giá</PaneTab>
            <PaneTab $w={81}>Đơn đặt hàng</PaneTab>
            <PaneTab $w={64} $active>Bán hàng</PaneTab>
            <PaneTab $w={82}>Xuất hóa đơn</PaneTab>
            <PaneTab $w={100}>Trả lại hàng bán</PaneTab>
            <PaneTab $w={109}>Giảm giá hàng bán</PaneTab>
            <PaneTab $w={51}>Thu nợ</PaneTab>
            <PaneTab $w={58}>Công nợ</PaneTab>
            <PaneTab $w={104}>Báo cáo phân tích</PaneTab>
            <TabScroll><Tri $dir="left" $c="#667" /><Tri $c="#1f3f7a" /></TabScroll>
            <GearBox><Icon name="gear" size={17} /><Caret $s={3} $c="#1f3f7a" /></GearBox>
          </PaneTabs>
          <StubRow>
            <StubField $w={142} $mr={33} $white={88} />
            <StubField $w={84} $mr={40} $white={78} />
            <StubField $w={83} $mr={65} $white={80} />
            <StubField $w={87} $mr={61} $white={80} />
            <StubField $w={80} $mr={8} $white={78} />
            <StubField $w={75} $white={0} />
          </StubRow>

          <GridWrap>
            <GridHead $cols={topCols}>
              <HeadCell><Icon name="pin" size={12} /></HeadCell>
              <HeadCell><HeadTitle>Tiền chiết khấu</HeadTitle><Icon name="pin" size={12} /></HeadCell>
              <HeadCell />
            </GridHead>
            <FilterRow $cols={topCols}>
              <span />
              <span><FilterOp>≤</FilterOp></span>
              <span><FilterOp>≤</FilterOp></span>
            </FilterRow>
            <RowsArea $h={502}>
              {topRows.map((r, i) => (
                <DataRow key={i} $cols={topCols} $hl={i === 1}>
                  <Cell>{r[0]}</Cell>
                  <Cell $pr={4}>{r[1]}</Cell>
                  <Cell />
                </DataRow>
              ))}
            </RowsArea>
            <TotalRow $cols={topCols}>
              <TotalCell>00</TotalCell>
              <TotalCell $pr={4}>10.500.000</TotalCell>
              <TotalCell />
            </TotalRow>
            <HScroll $h={18}><ScrollTrack /><ScrollBtn><Tri $c="#111" /></ScrollBtn></HScroll>
          </GridWrap>

          <Band />

          <GridWrap>
            <GridHead $cols={lowCols}>
              <HeadCell /><HeadCell /><HeadCell /><HeadCell /><HeadCell /><HeadCell /><HeadCell />
              <HeadCell><Icon name="pin" size={12} /></HeadCell>
              <HeadCell>Tỷ lệ CK (%)<Icon name="pin" size={12} /></HeadCell>
              <HeadCell $align="flex-start" $pl={17}>Tiền chiết khấu</HeadCell>
            </GridHead>
            <RowsArea $h={160}>
              {Array.from({ length: 8 }, (_, i) => (
                <DataRow key={i} $cols={lowCols}>
                  {Array.from({ length: 10 }, (_, c) => (
                    <Cell key={c} $solid={c === 0}>
                      {i === 0 && c === 7 ? '10.000' : i === 0 && c === 8 ? '0,00' : ''}
                    </Cell>
                  ))}
                </DataRow>
              ))}
            </RowsArea>
            <TotalRow $cols={lowCols}>
              <TotalCell $left>Số dòng = 1</TotalCell>
              <TotalCell $light /><TotalCell $light /><TotalCell $light /><TotalCell $light />
              <TotalCell>1,00</TotalCell>
              <TotalCell />
              <TotalCell $pr={2}>10.000</TotalCell>
              <TotalCell $light />
              <TotalCell />
            </TotalRow>
            <HScroll $h={18} $bg={C.bar}>
              <ScrollTrack $fill={84.2}><Tri $dir="left" $c="#111" /></ScrollTrack>
              <ScrollBtn><Tri $c="#111" /></ScrollBtn>
            </HScroll>
          </GridWrap>
        </Pane>
      </Main>

      <Status>
        <StatusCell $w={200}><Icon name="server" size={15} />Máy chủ: H11-0131\MISASME2017</StatusCell>
        <StatusCell $w={227}><Icon name="db" size={15} />Tên DLKT: MISASME2017SampleTT133</StatusCell>
        <StatusCell $w={118}><Icon name="user" size={15} />Người dùng: Admin</StatusCell>
        <StatusCell $w={10} />
        <StatusCell $w={298} />
        <StatusCell $w={148} $center><b>Tổng đài tư vấn: 1900 8677</b></StatusCell>
        <StatusCell $w={31} $center>OVR</StatusCell>
        <StatusCell $w={32} $center>NUM</StatusCell>
        <StatusCell $w={36} />
        <StatusCell $w={36} />
        <StatusCell $w={54} $center>10:51 SA</StatusCell>
        <StatusCell $w={60} $center>07/06/2017</StatusCell>
      </Status>

      <Taskbar>
        <StartBtn><WinLogo><i /><i /><i /><i /></WinLogo></StartBtn>
        <TaskSearch>
          <Cortana />
          <SearchHint>Type here to search</SearchHint>
          <Icon name="mic" size={20} />
        </TaskSearch>
        <TaskApps>
          <TaskApp><Icon name="thunder" size={26} /></TaskApp>
          <TaskApp><Icon name="sticky" size={22} /></TaskApp>
          <TaskApp><Icon name="lifesaver" size={24} /></TaskApp>
          <TaskApp><Icon name="headset" size={26} /></TaskApp>
          <TaskApp $bg="#8f4f1c" $accent="#f07820">
            <SkypeMark>S</SkypeMark>
            <Badge $r={9} $b={5} $s={11} $bg="#f5b400" $c="#222" $fs={9}>1</Badge>
          </TaskApp>
          <TaskApp><Icon name="firefox" size={24} /></TaskApp>
          <TaskApp><Icon name="folder" size={24} /></TaskApp>
          <TaskApp $bg="#333"><Icon name="misa" size={26} /></TaskApp>
        </TaskApps>
        <Tray>
          <Svg width="14" height="14" viewBox="0 0 14 14"><path d="M1 10l6-6 6 6" fill="none" stroke="#eee" strokeWidth="1.3" /></Svg>
          <Icon name="monitor" size={18} />
          <Icon name="volume" size={18} />
          <span>ENG</span>
          <Clock>10:51 AM<br />6/7/2017</Clock>
          <NotifyWrap>
            <Icon name="bubble" size={18} />
            <Badge $r={-5} $b={-7} $s={14} $bg="#333" $c="#eee" $fs={10}>1</Badge>
          </NotifyWrap>
        </Tray>
      </Taskbar>

      <Dialog>
        <DialogTitle>
          <Icon name="note" size={16} />
          <DialogName>Bán hàng hóa, dịch vụ trong nước chưa thu tiền - Công ty TNHH XYZ</DialogName>
          <WinButtons $gap={4}>
            <Icon name="winmin" size={15} /><Icon name="winmax" size={15} /><Icon name="winclose" size={15} />
          </WinButtons>
        </DialogTitle>
        <DlgBar>
          {dlgTools.map((t, i) => (t.sep
            ? <ToolSep key={i} $ml={t.ml} />
            : (
              <Tool key={i} $w={t.w} $off={t.off}>
                <Icon name={t.name} size={19} off={t.off} />
                <ToolText>{t.text}</ToolText>
                {t.drop !== undefined && <ToolDrop $r={t.drop}><Caret $s={3} $c={t.off ? '#556' : '#111'} /></ToolDrop>}
              </Tool>
            )))}
        </DlgBar>

        <DlgBody>
          <HeadRow $h={20} $mt={13}>
            <BigTitle>Chứng từ bán hàng</BigTitle>
            <Combo $w={210}><ComboText>1. Bán hàng hóa, dịch vụ trong nước</ComboText><ComboBtn><Caret /></ComboBtn></Combo>
            <CheckLabel $ml={6}><Check><Tick /></Check>Kiêm phiếu xuất kho</CheckLabel>
          </HeadRow>
          <HeadRow $h={23} $mt={6}>
            <SearchBox>
              <SearchTools><Icon name="tools" size={15} /><Caret $s={3} /></SearchTools>
              <SearchInput>Nhập số báo giá</SearchInput>
              <SearchBtn><Icon name="search" size={17} /><Caret $s={4} /></SearchBtn>
            </SearchBox>
            <RadioLabel $w={111} $ml={14}><Radio $on />Chưa thu tiền</RadioLabel>
            <RadioLabel $w={102}><Radio />Thu tiền ngay</RadioLabel>
            <Combo $w={99} $off><ComboText>Tiền mặt</ComboText><ComboBtn $off><Caret $c="#9a9a9a" /></ComboBtn></Combo>
            <CheckLabel $ml={11}><Check><Tick /></Check>Lập kèm hóa đơn</CheckLabel>
            <Stamp>ĐÃ LẬP HÓA ĐƠN</Stamp>
          </HeadRow>

          <TabRow $mt={4}>
            <FormTab $w={106} $active><span><u>C</u>hứng từ ghi nợ</span></FormTab>
            <FormTab $w={79}><span>Phiếu <u>x</u>uất</span></FormTab>
            <FormTab $w={67}><span><u>H</u>óa đơn</span></FormTab>
          </TabRow>

          <Panel $h={191} $pad="17px 8px 0 9px" $gap={10}>
            <Group $pr={9}>
              <Legend>Thông tin chung</Legend>
              <FieldRow>
                <Label $w={70}>Khách hàng</Label>
                <Combo $w={192}><ComboText>HK013</ComboText><ComboBtn $w={38}><Icon name="plus" size={15} /><Caret /></ComboBtn></Combo>
                <Field $ml={8}>Công ty CP Đại Dương</Field>
              </FieldRow>
              <FieldRow>
                <Label $w={70}>Mã số thuế</Label>
                <Field $w={192} />
                <Label $w={80} $pl={10}>Người liên hệ</Label>
                <Field />
              </FieldRow>
              <FieldRow>
                <Label $w={70}>Địa chỉ</Label>
                <Field>68 Trần Bình Trọng, Hà Nội</Field>
              </FieldRow>
              <FieldRow>
                <Label $w={70}>Diễn giải</Label>
                <Field>Bán hàng Công ty CP Đại Dương theo hóa đơn 0000</Field>
              </FieldRow>
              <FieldRow>
                <Label $w={70}>NV bán hàng</Label>
                <Combo $w={192}><ComboText /><ComboBtn $w={38}><Icon name="plus" size={15} /><Caret /></ComboBtn></Combo>
              </FieldRow>
              <FieldRow $h={23}>
                <Label $w={72}>Tham chiếu</Label>
                <Links><span>XK023</span><span>-0000</span><span>...</span></Links>
                <LensBtn><Icon name="lensPlus" size={18} /></LensBtn>
              </FieldRow>
            </Group>
            <Group $w={206} $pr={6}>
              <Legend>Chứng từ</Legend>
              <FieldRow>
                <Label $w={86}>Ngày hạch toán</Label>
                <Combo $w={104}><ComboText>01/06/2017</ComboText><ComboBtn><Caret /></ComboBtn></Combo>
              </FieldRow>
              <FieldRow>
                <Label $w={86}>Ngày chứng từ</Label>
                <Combo $w={104}><ComboText>27/05/2017</ComboText><ComboBtn><Caret /></ComboBtn></Combo>
              </FieldRow>
              <FieldRow>
                <Label $w={86}>Số chứng từ</Label>
                <Field $w={104}>BH00008</Field>
              </FieldRow>
            </Group>
          </Panel>

          <FieldRow $mt={7} $pl={10}>
            <Label $w={82}>Điều khoản TT</Label>
            <Combo $w={112}><ComboText /><ComboBtn><Caret /></ComboBtn></Combo>
            <Label $w={107} $pl={14}>Số ngày được nợ</Label>
            <Spinner>
              <SpinBlank />
              <SpinBtns>
                <SpinBtn><Caret $up $s={2} /></SpinBtn>
                <SpinBtn><Caret $s={2} $c="#8a8a9a" /></SpinBtn>
              </SpinBtns>
            </Spinner>
            <Label $w={52} $pl={3}>(ngày)</Label>
            <Label $w={86}>Hạn thanh toán</Label>
            <Combo $w={88}><ComboText /><ComboBtn><Caret /></ComboBtn></Combo>
          </FieldRow>

          <CollapseBtn><Caret $up $s={3} $c="#fff" /></CollapseBtn>

          <TabsLine>
            <TabsLeft>
              <FormTab $w={86} $h={20}><span><u>1</u>. Hàng tiền</span></FormTab>
              <FormTab $w={63} $h={20}><span><u>2</u>. Thuế</span></FormTab>
              <FormTab $w={76} $h={20}><span><u>3</u>. Giá vốn</span></FormTab>
              <FormTab $w={85} $h={20}><span><u>4</u>. Thống kê</span></FormTab>
              <FormTab $w={63} $h={20} $active><span><u>5</u>. Khác</span></FormTab>
            </TabsLeft>
            <RateBox>
              <Label $w={54}>Loại tiền</Label>
              <Combo $w={59}><ComboText>VND</ComboText><ComboBtn><Caret /></ComboBtn></Combo>
              <Label $w={53} $pl={7}>Tỷ giá</Label>
              <Field $w={80} $grey $right>1,00</Field>
            </RateBox>
          </TabsLine>

          <Panel $h={247} $pad="0" $col>
            <PrintCheck><Check><Tick /></Check><DottedLabel>In kèm bảng kê</DottedLabel></PrintCheck>
            <FieldRow $mt={7} $pl={10}>
              <Label $w={110} $align="right" $pr={25}>Số</Label>
              <Field $w={113}>BK00001</Field>
              <Label $w={102} $align="right" $pr={20}>Ngày</Label>
              <Combo $w={102}><ComboText>27/05/2017</ComboText><ComboBtn><Caret /></ComboBtn></Combo>
              <Label $w={118} $pl={12}>Tên mặt hàng chung</Label>
              <Field $w={367} />
            </FieldRow>
            <FieldRow $mt={3} $pl={10}>
              <Label $w={110}>Địa điểm giao hàng</Label>
              <Field $w={802} />
            </FieldRow>
            <FieldRow $mt={3} $h={46} $pl={10}>
              <Label $w={110} $top>Điều khoản khác</Label>
              <Field $w={802} $h={46} />
            </FieldRow>
          </Panel>

          <Footer>
            <FootBtns>
              <FootBtn>Phân bổ chiết khấu...</FootBtn>
              <FootBtn>Xem công nợ</FootBtn>
            </FootBtns>
            <Totals>
              <TotalLabel>Tổng tiền hàng</TotalLabel><TotalValue>10.000</TotalValue><span />
              <TotalLabel>Tiền thuế GTGT</TotalLabel><TotalValue>1.000</TotalValue>
              <TotalLabel>Tiền chiết khấu</TotalLabel><TotalValue>0</TotalValue><span />
              <TotalLabel>Tổng tiền thanh toán</TotalLabel><TotalValue>11.000</TotalValue>
            </Totals>
          </Footer>
        </DlgBody>
        <DlgFoot><ResizeGrip /></DlgFoot>

        <Marker $x={156} $y={530} $w={141} $h={30} />
        <Marker $x={264} $y={558} $w={147} $h={33} />
        <Marker $x={471} $y={551} $w={129} $h={52} />
        <Marker $x={709} $y={556} $w={337} $h={46} />
      </Dialog>
    </Root>
  );
}
